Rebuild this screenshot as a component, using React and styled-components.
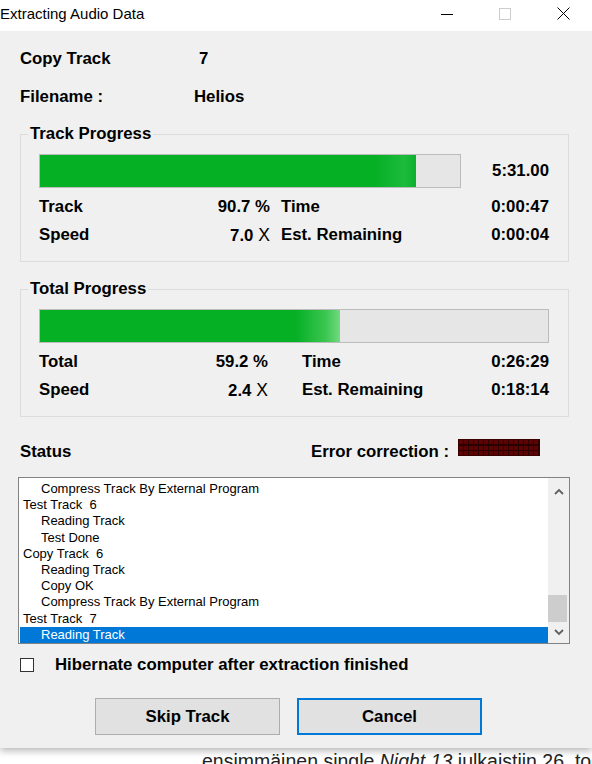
import React from "react";
import styled, { createGlobalStyle } from "styled-components";

const Global = createGlobalStyle`
  html, body { margin: 0; padding: 0; background: #fff; }
  body {
    width: 592px; height: 764px; overflow: hidden;
    font-family: "Liberation Sans", Arial, sans-serif; color: #000;
  }
  * { box-sizing: border-box; }
`;

const Page = styled.div`
  width: 592px; height: 764px; overflow: hidden; background: #fff;
  display: flex; flex-direction: column;
`;

const Window = styled.div`
  flex: none; height: 748px; background: #f0f0f0;
  display: flex; flex-direction: column;
  box-shadow: 0 3px 7px rgba(0, 0, 0, 0.28);
  position: relative; z-index: 1;
`;

const TitleBar = styled.div`
  flex: none; height: 31px; background: #fff;
  display: flex; align-items: stretch;
`;

const Title = styled.div`
  flex: 1; font-size: 15px; line-height: 27px; color: #000; padding-left: 0;
`;

const CaptionBtn = styled.div`
  width: 58px; display: flex; align-items: center; justify-content: center;
  padding-bottom: 4px;
`;

const Body = styled.div`
  flex: 1; padding: 9px 22px 0 18px;
  display: flex; flex-direction: column;
`;

const Bold = styled.span`
  font-weight: 700; font-size: 16.8px; color: #000; white-space: nowrap;
`;

const InfoRow = styled.div`
  display: grid; grid-template-columns: 174px 1fr;
  height: 38px; align-items: center; padding-left: 2px;
`;

const InfoValue = styled(Bold)`
  padding-left: ${(p) => p.$indent || 0}px;
`;

const Group = styled.fieldset`
  margin: ${(p) => p.$mt}px 1px 0 2px; padding: 0;
  border: 1px solid #dcdcdc; min-width: 0;
`;

const Legend = styled.legend`
  margin-left: 7px; padding: 0 2px; font-weight: 700; font-size: 16.8px;
  line-height: 20px; color: #000;
`;

const GroupInner = styled.div`
  padding: 10px 19px 12px 18px;
`;

const BarRow = styled.div`
  display: flex; align-items: center; height: 34px;
`;

const Bar = styled.div`
  flex: none; width: ${(p) => p.$w}px; height: 34px;
  border: 1px solid #bcbcbc; background: #e6e6e6; overflow: hidden;
`;

const Fill = styled.div`
  height: 100%;
  background: ${(p) =>
    p.$sheen === "strong"
      ? "linear-gradient(to right, #06b025 0, #06b025 calc(100% - 44px), #3cc652 calc(100% - 14px), #72da80 100%)"
      : "linear-gradient(to right, #06b025 0, #06b025 calc(100% - 40px), #1dbb3c calc(100% - 12px), #0cb12c 100%)"};
`;

const BarTime = styled(Bold)`
  flex: 1; text-align: right;
`;

const Stats = styled.div`
  display: grid;
  grid-template-columns: ${(p) => p.$c1}px ${(p) => p.$c2}px 1fr auto;
  grid-auto-rows: 28px; align-items: center; margin-top: 5px;
`;

const Num = styled(Bold)`
  text-align: right;
`;

const Label2 = styled(Bold)`
  padding-left: ${(p) => p.$pad}px;
`;

const Times = styled.span`
  font-weight: 400; font-size: 17.5px;
`;

const StatusRow = styled.div`
  display: flex; align-items: flex-start; height: 20px; margin-top: 25px;
  padding-left: 2px; line-height: 20px;
`;

const ErrGroup = styled.div`
  margin-left: auto; margin-right: 30px; display: flex; align-items: flex-start; gap: 9px;
`;

const Led = styled.div`
  width: 82px; height: 17px; margin-top: -3px;
  background-color: #5c0404;
  background-image:
    repeating-linear-gradient(to right, transparent 0, transparent 4px, #2a0000 4px, #2a0000 5px),
    repeating-linear-gradient(to bottom, transparent 0, transparent 4px, #2a0000 4px, #2a0000 5.5px);
  border: 1px solid #3a0000;
`;

const ListBox = styled.div`
  margin-top: 15px; height: 167px; border: 1px solid #828282; background: #fff;
  display: flex;
`;

const ListItems = styled.div`
  flex: 1; padding-top: 3px; padding-left: 1px; overflow: hidden;
`;

const Item = styled.div`
  height: 16.2px; line-height: 16.2px; font-size: 13px; white-space: pre;
  padding-left: ${(p) => (p.$sub ? 21 : 3)}px;
  background: ${(p) => (p.$sel ? "#0078d7" : "transparent")};
  color: ${(p) => (p.$sel ? "#fff" : "#000")};
`;

const ScrollBar = styled.div`
  flex: none; width: 21px; background: #f0f0f0;
  display: flex; flex-direction: column;
`;

const ArrowBtn = styled.div`
  flex: none; height: 21px; display: flex; align-items: center; justify-content: center;
  padding-top: ${(p) => (p.$up ? 5 : 0)}px;
`;

const Track = styled.div`
  flex: 1; display: flex; flex-direction: column; justify-content: flex-end;
`;

const Thumb = styled.div`
  height: 27px; margin-right: 2px; background: #cdcdcd;
`;

const CheckRow = styled.div`
  display: flex; align-items: center; height: 15px; margin-top: 13px; padding-left: 2px;
`;

const CheckBox = styled.div`
  width: 14px; height: 14px; border: 1px solid #333; background: #fff; margin-right: 21px;
`;

const ButtonRow = styled.div`
  display: flex; gap: 17px; margin-top: 26px; padding-left: 77px;
`;

const Button = styled.div`
  width: 185px; height: 37px; background: #e1e1e1;
  border: ${(p) => (p.$default ? "2px solid #0078d7" : "1px solid #adadad")};
  display: flex; align-items: center; justify-content: center;
  font-weight: 700; font-size: 16.8px; color: #000;
`;

const Under = styled.div`
  flex: none; padding-left: 202px; margin-top: 1px;
  font-size: 19.5px; line-height: 24px; color: #222; white-space: nowrap;
`;

const Chevron = ({ up }) => (
  <svg width="10" height="7" viewBox="0 0 10 7">
    <path
      d={up ? "M1 6 L5 2 L9 6" : "M1 1 L5 5 L9 1"}
      fill="none"
      stroke="#606060"
      strokeWidth="1.8"
    />
  </svg>
);

const logLines = [
  { t: "Compress Track By External Program", sub: true },
  { t: "Test Track  6" },
  { t: "Reading Track", sub: true },
  { t: "Test Done", sub: true },
  { t: "Copy Track  6" },
  { t: "Reading Track", sub: true },
  { t: "Copy OK", sub: true },
  { t: "Compress Track By External Program", sub: true },
  { t: "Test Track  7" },
  { t: "Reading Track", sub: true, sel: true },
];

function ProgressGroup({ title, mt, barW, fill, sheen, time, rows, c1, c2, pad }) {
  return (
    <Group $mt={mt}>
      <Legend>{title}</Legend>
      <GroupInner>
        <BarRow>
          <Bar $w={barW}>
            <Fill $sheen={sheen} style={{ width: `${fill}%` }} />
          </Bar>
          {time && <BarTime>{time}</BarTime>}
        </BarRow>
        <Stats $c1={c1} $c2={c2}>
          {rows.map((r) => (
            <React.Fragment key={r[0]}>
              <Bold>{r[0]}</Bold>
              <Num>
                {r[1]}
                {r[4] ? <Times> X</Times> : null}
              </Num>
              <Label2 $pad={pad}>{r[2]}</Label2>
              <Num>{r[3]}</Num>
            </React.Fragment>
          ))}
        </Stats>
      </GroupInner>
    </Group>
  );
}

export default function App() {
  return (
    <Page>
      <Global />
      <Window>
        <TitleBar>
          <Title>Extracting Audio Data</Title>
          <CaptionBtn>
            <svg width="12" height="12" viewBox="0 0 12 12">
              <path d="M0 6.5 H12" stroke="#000" strokeWidth="1" />
            </svg>
          </CaptionBtn>
          <CaptionBtn>
            <svg width="12" height="12" viewBox="0 0 12 12">
              <rect x="0.5" y="0.5" width="11" height="11" fill="none" stroke="#cccccc" strokeWidth="1" />
            </svg>
          </CaptionBtn>
          <CaptionBtn>
            <svg width="13" height="13" viewBox="0 0 13 13">
              <path d="M0.5 0.5 L12.5 12.5 M12.5 0.5 L0.5 12.5" stroke="#000" strokeWidth="1" />
            </svg>
          </CaptionBtn>
        </TitleBar>
        <Body>
          <InfoRow>
            <Bold>Copy Track</Bold>
            <InfoValue $indent={5}>7</InfoValue>
          </InfoRow>
          <InfoRow>
            <Bold>Filename :</Bold>
            <InfoValue>Helios</InfoValue>
          </InfoRow>

          <ProgressGroup
            title="Track Progress"
            mt={8}
            barW={422}
            fill={89.5}
            sheen="soft"
            time="5:31.00"
            c1={130}
            c2={101}
            pad={11}
            rows={[
              ["Track", "90.7 %", "Time", "0:00:47"],
              ["Speed", "7.0", "Est. Remaining", "0:00:04", true],
            ]}
          />
          <ProgressGroup
            title="Total Progress"
            mt={17}
            barW={510}
            fill={59}
            sheen="strong"
            c1={130}
            c2={99}
            pad={34}
            rows={[
              ["Total", "59.2 %", "Time", "0:26:29"],
              ["Speed", "2.4", "Est. Remaining", "0:18:14", true],
            ]}
          />

          <StatusRow>
            <Bold>Status</Bold>
            <ErrGroup>
              <Bold>Error correction :</Bold>
              <Led />
            </ErrGroup>
          </StatusRow>

          <ListBox>
            <ListItems>
              {logLines.map((l, i) => (
                <Item key={i} $sub={l.sub} $sel={l.sel}>
                  {l.t}
                </Item>
              ))}
            </ListItems>
            <ScrollBar>
              <ArrowBtn $up>
                <Chevron up />
              </ArrowBtn>
              <Track>
                <Thumb />
              </Track>
              <ArrowBtn>
                <Chevron />
              </ArrowBtn>
            </ScrollBar>
          </ListBox>

          <CheckRow>
            <CheckBox />
            <Bold>Hibernate computer after extraction finished</Bold>
          </CheckRow>

          <ButtonRow>
            <Button>Skip Track</Button>
            <Button $default>Cancel</Button>
          </ButtonRow>
        </Body>
      </Window>
      <Under>
        ensimmäinen single <i>Night 13</i> julkaistiin 26. toukokuuta 2003
      </Under>
    </Page>
  );
}
